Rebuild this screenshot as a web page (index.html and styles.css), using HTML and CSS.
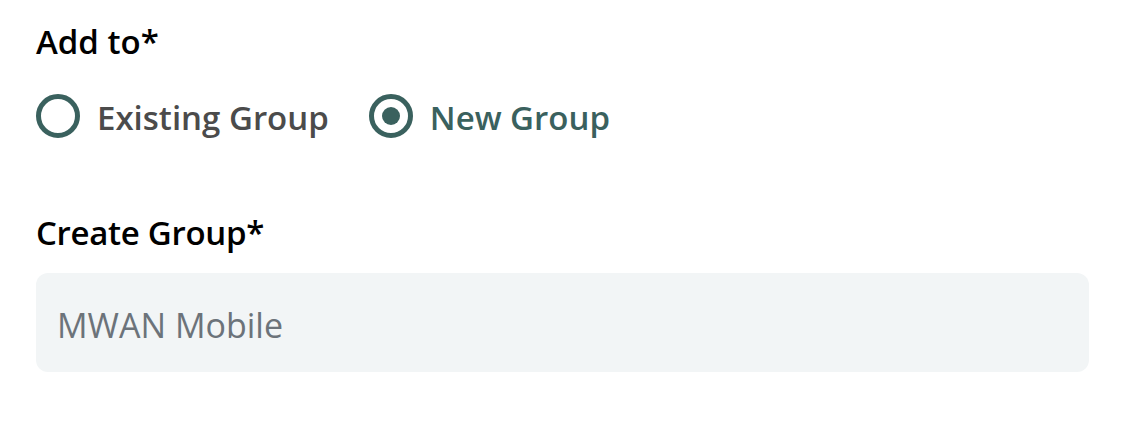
FILE: index.html
```html
<!DOCTYPE html>
<html lang="en">
<head>
<meta charset="utf-8">
<title>Add to group</title>
<link rel="stylesheet" href="styles.css">
</head>
<body>
<form class="form">
  <div class="field">
    <div class="label">Add to*</div>
    <div class="radios">
      <label class="radio">
        <span class="ring"></span>
        <span class="radio-text">Existing Group</span>
      </label>
      <label class="radio checked">
        <span class="ring"><span class="dot"></span></span>
        <span class="radio-text">New Group</span>
      </label>
    </div>
  </div>
  <div class="field field-create">
    <div class="label">Create Group*</div>
    <div class="input"><span class="placeholder">MWAN Mobile</span></div>
  </div>
</form>
</body>
</html>
```
FILE: styles.css
```css
* { box-sizing: border-box; }
html, body { margin: 0; background: #ffffff; }
body {
  font-family: "Open Sans", "Noto Sans", sans-serif;
  width: 1135px;
  height: 430px;
  overflow: hidden;
}
.form {
  padding: 21px 46px 0 36px;
  display: flex;
  flex-direction: column;
}
.label {
  font-size: 33px;
  line-height: 42px;
  font-weight: 600;
  color: #000000;
}
.label-create { letter-spacing: -0.2px; }
.radios {
  display: flex;
  gap: 40px;
  margin-top: 31px;
}
.radio {
  display: flex;
  align-items: center;
  gap: 17px;
  height: 44px;
}
.ring {
  width: 44px;
  height: 44px;
  border-radius: 50%;
  border: 5px solid #3a615e;
  display: flex;
  align-items: center;
  justify-content: center;
}
.dot {
  width: 18px;
  height: 18px;
  border-radius: 50%;
  background: #3a615e;
}
.radio-text {
  font-size: 33px;
  font-weight: 600;
  color: #4b4b4b;
  line-height: 40px;
  padding-top: 4px;
}
.checked .radio-text { color: #3a615e; }
.field-create { margin-top: 74px; }
.field-create .label { letter-spacing: -0.3px; }
.input {
  margin-top: 19px;
  height: 99px;
  background: #f2f5f6;
  border-radius: 12px;
  display: flex;
  align-items: center;
  padding-left: 21px;
}
.placeholder {
  font-size: 34px;
  color: #6c737a;
  line-height: 40px;
  padding-top: 5px;
}
```
